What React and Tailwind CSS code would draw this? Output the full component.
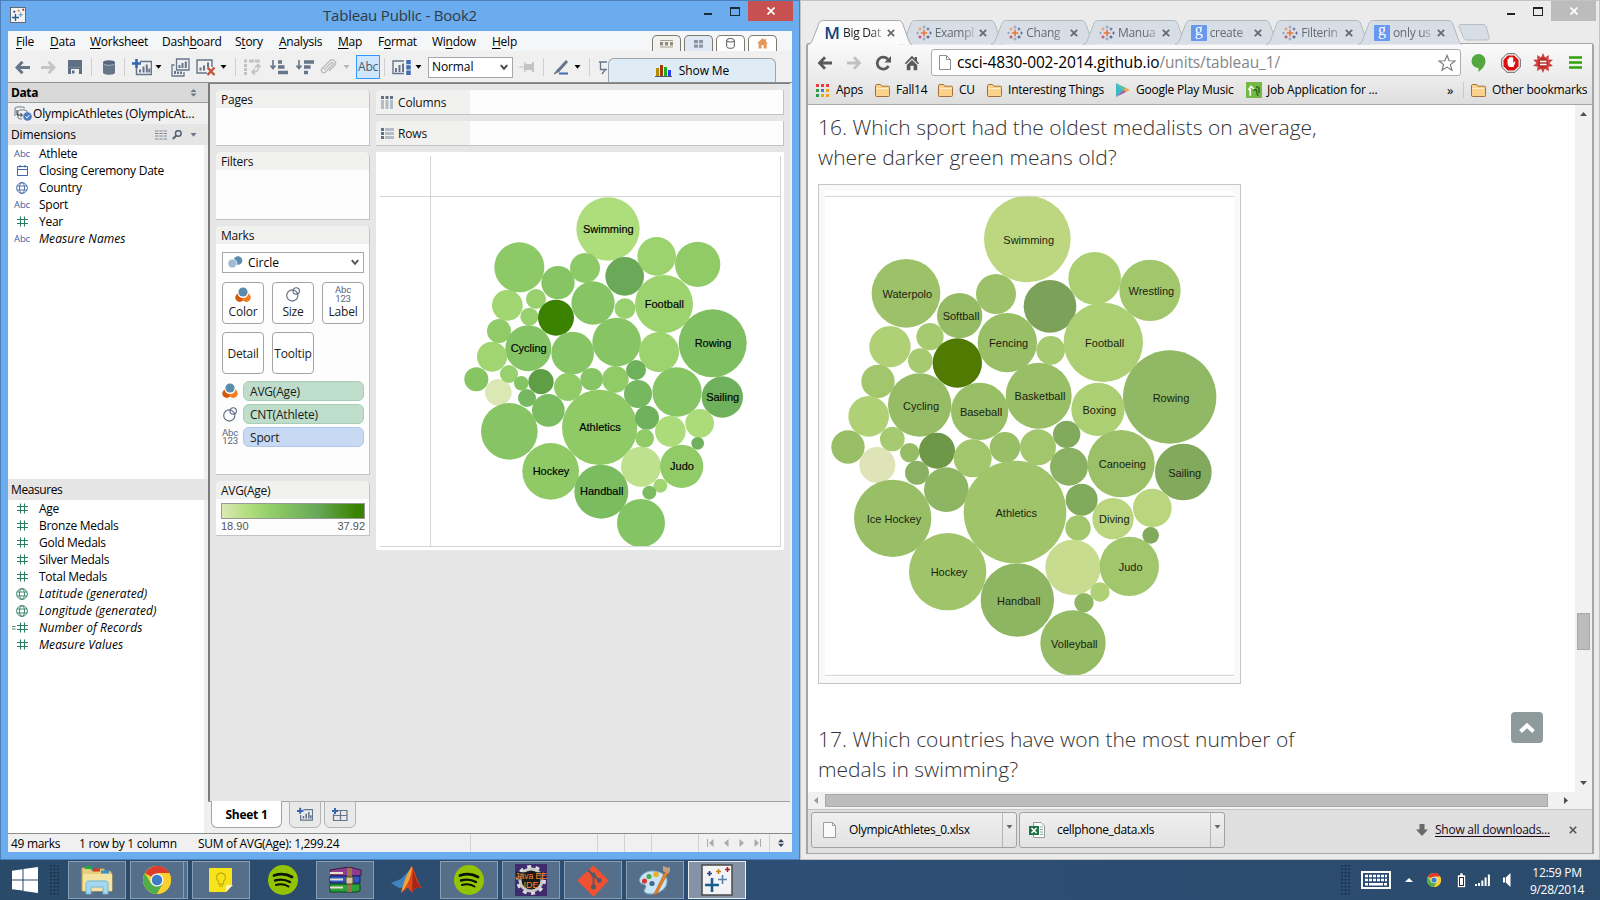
import React from "react";

/* ---------- data ---------- */

// x, y, radius, fill, label (chart units are thirds of a pixel)
const SHEET_BUBBLES = [
  [504, 147, 95, "#aedd7b", "Swimming"],
  [238, 262, 75, "#8dc966"],
  [354, 308, 50, "#87c564"],
  [435, 264, 45, "#8dc966"],
  [554, 289, 58, "#69a958"],
  [650, 229, 58, "#9dd36f"],
  [773, 253, 68, "#91cb68"],
  [202, 376, 46, "#a0d571"],
  [288, 357, 30, "#97d06c"],
  [268, 410, 27, "#97d06c"],
  [348, 413, 54, "#3b8200"],
  [459, 369, 65, "#87c564"],
  [555, 386, 31, "#97d06c"],
  [672, 372, 87, "#9dd36f", "Football"],
  [818, 490, 102, "#7fbf62", "Rowing"],
  [177, 453, 36, "#91cb68"],
  [265, 505, 69, "#85c464", "Cycling"],
  [156, 530, 45, "#a0d571"],
  [398, 519, 64, "#87c564"],
  [530, 486, 73, "#87c564"],
  [657, 516, 60, "#9dd36f"],
  [109, 598, 36, "#87c564"],
  [175, 637, 40, "#dce8b4"],
  [207, 582, 27, "#97d06c"],
  [244, 610, 22, "#85c464"],
  [303, 605, 38, "#5e9f45"],
  [384, 621, 42, "#91cb68"],
  [455, 598, 34, "#87c564"],
  [526, 598, 40, "#91cb68"],
  [588, 570, 30, "#6fb05d"],
  [594, 642, 42, "#76b860"],
  [711, 636, 74, "#87c564"],
  [847, 651, 62, "#6fb05d", "Sailing"],
  [261, 654, 27, "#76b860"],
  [325, 691, 49, "#7cbc61"],
  [208, 754, 85, "#87c564"],
  [479, 742, 113, "#8fca67", "Athletics"],
  [621, 713, 36, "#6fb05d"],
  [614, 775, 28, "#91cb68"],
  [691, 754, 46, "#abdc79"],
  [779, 730, 43, "#abdc79"],
  [773, 790, 19, "#6fb05d"],
  [603, 860, 60, "#bde18c"],
  [725, 859, 65, "#91cb68", "Judo"],
  [661, 917, 21, "#a0d571"],
  [628, 938, 21, "#7cbc61"],
  [332, 874, 85, "#8fca67", "Hockey"],
  [484, 935, 81, "#7cbc61", "Handball"],
  [603, 1029, 72, "#85c464"],
];

const PAGE_BUBBLES = [
  [652, 177, 130, "#bcd77f", "Swimming"],
  [288, 340, 103, "#9cc168", "Waterpolo"],
  [449, 407, 68, "#95bb65", "Softball"],
  [558, 342, 60, "#9cc168"],
  [720, 379, 79, "#7ba258"],
  [854, 295, 79, "#accf74"],
  [1020, 331, 92, "#a1c66c", "Wrestling"],
  [240, 500, 62, "#afd075"],
  [360, 470, 41, "#a6ca6f"],
  [331, 542, 37, "#a6ca6f"],
  [442, 549, 74, "#507a02"],
  [592, 488, 89, "#98be66", "Fencing"],
  [722, 511, 43, "#a6ca6f"],
  [880, 487, 119, "#accf74", "Football"],
  [1079, 651, 140, "#91b864", "Rowing"],
  [204, 604, 50, "#a1c66c"],
  [329, 675, 95, "#96bc65", "Cycling"],
  [176, 709, 61, "#afd075"],
  [509, 694, 86, "#98be66", "Baseball"],
  [686, 647, 99, "#98be66", "Basketball"],
  [864, 688, 80, "#accf74", "Boxing"],
  [114, 801, 50, "#98be66"],
  [202, 855, 54, "#dfe4b8"],
  [247, 777, 37, "#a6ca6f"],
  [299, 818, 29, "#96bc65"],
  [381, 812, 54, "#6e9747"],
  [488, 835, 57, "#a1c66c"],
  [585, 802, 46, "#98be66"],
  [684, 802, 54, "#a1c66c"],
  [770, 763, 41, "#82aa5d"],
  [777, 860, 57, "#89b161"],
  [933, 851, 101, "#9bc068", "Canoeing"],
  [1120, 876, 85, "#82a95c", "Sailing"],
  [321, 878, 36, "#89b161"],
  [409, 929, 67, "#8db562"],
  [248, 1015, 116, "#98be66", "Ice Hockey"],
  [615, 996, 154, "#9fc46a", "Athletics"],
  [815, 959, 48, "#82aa5d"],
  [804, 1044, 38, "#a1c66c"],
  [909, 1016, 62, "#b9d57d", "Diving"],
  [1027, 984, 58, "#b9d57d"],
  [1022, 1066, 25, "#82aa5d"],
  [789, 1162, 83, "#c7dc8e"],
  [958, 1159, 89, "#a1c66c", "Judo"],
  [870, 1236, 29, "#afd075"],
  [822, 1268, 29, "#8db562"],
  [413, 1175, 116, "#9fc46a", "Hockey"],
  [622, 1260, 110, "#8db562", "Handball"],
  [789, 1389, 98, "#95bb64", "Volleyball"],
];

const MENUS = [
  ["", "F", "ile", "w-[34px]"],
  ["", "D", "ata", "w-[40px]"],
  ["", "W", "orksheet", "w-[72px]"],
  ["Dash", "b", "oard", "w-[73px]"],
  ["S", "t", "ory", "w-[44px]"],
  ["", "A", "nalysis", "w-[59px]"],
  ["", "M", "ap", "w-[40px]"],
  ["F", "o", "rmat", "w-[54px]"],
  ["Wi", "n", "dow", "w-[60px]"],
  ["", "H", "elp", "w-[40px]"],
];

/* ---------- shared pieces ---------- */

function Bubbles({ data, dx = 1, offset = 10, labels = "" }) {
  return data.map(([x, y, r, fill, label], i) => (
    <g key={i}>
      <circle cx={x} cy={y} r={r} fill={fill} />
      {label && (
        <text x={x + dx} y={y + offset} textAnchor="middle" fontSize="33" className={labels}>
          {label}
        </text>
      )}
    </g>
  ));
}

function Caret({ className = "" }) {
  return (
    <svg className={className} width="7" height="4" viewBox="0 0 7 4">
      <path d="M0.5 0H6.5L3.5 3.8Z" fill="currentColor" />
    </svg>
  );
}

function Sep({ className = "" }) {
  return <div className={"h-[18px] w-px shrink-0 bg-[#cfcfcf] " + className} />;
}

function TableauCrosses({ size = 16 }) {
  return (
    <svg width={size} height={size} viewBox="0 0 32 32">
      <rect x="1" y="1" width="30" height="30" fill="#f3f3f5" stroke="#4a4a4a" strokeWidth="1.500" />
      <path d="M11 14v14M4 21h14" stroke="#1b5c8f" strokeWidth="2.600" />
      <path d="M8.500 7v5M6 9.500h5" stroke="#2d3e83" strokeWidth="1.600" />
      <path d="M17.500 5v5M15 7.500h5" stroke="#c3811c" strokeWidth="1.600" />
      <path d="M26.500 3v5M24 5.500h5" stroke="#a02323" strokeWidth="1.600" />
      <path d="M21.500 11v9M17 15.500h9" stroke="#5284ad" strokeWidth="1.600" />
    </svg>
  );
}

function Sparkle() {
  return (
    <svg width="16" height="16" viewBox="0 0 16 16" fill="none">
      <path d="M8 4.800v6.400M4.800 8h6.400" stroke="#e8763a" strokeWidth="1.600" />
      <path d="M8 0.500v3M6.500 2h3M8 12.500v3M6.500 14h3" stroke="#8ba0bd" />
      <path d="M4 2.500v3M2.500 4h3" stroke="#e8915c" />
      <path d="M12 2.500v3M10.500 4h3M14.500 6.500v3M13.200 8h2.600" stroke="#5d6b96" />
      <path d="M4 10.500v3M2.500 12h3" stroke="#c9566a" strokeWidth="1.400" />
      <path d="M12 10.500v3M10.500 12h3" stroke="#5d6b96" strokeWidth="1.400" />
      <path d="M1.500 6.800v2.400M0.300 8h2.400" stroke="#8ba0bd" />
    </svg>
  );
}

function ChromeLogo({ size }) {
  return (
    <svg width={size} height={size} viewBox="0 0 28 28">
      <circle cx="14" cy="14" r="14" fill="#fbd02c" />
      <path d="M14 14 1.900 7A14 14 0 0 1 26.100 7Z" fill="#dc3b2e" />
      <path d="M14 0a14 14 0 0 1 12.100 7H14Z" fill="#dc3b2e" />
      <path d="M1.900 7A14 14 0 0 0 14 28L20 17.500 8 17.500Z" fill="#4fae4b" />
      <path d="M14 7H26.100A14 14 0 0 1 14 28L20 17.500Z" fill="#fbd02c" />
      <circle cx="14" cy="14" r="6.600" fill="#f3f3f3" />
      <circle cx="14" cy="14" r="5.200" fill="#3b7cc4" />
    </svg>
  );
}

function ColorDots() {
  return (
    <svg width="16" height="16" viewBox="0 0 16 16">
      <circle cx="4.700" cy="10.500" r="4.400" fill="#d45a0b" />
      <circle cx="11.300" cy="10.500" r="4.400" fill="#f57d20" />
      <circle cx="8" cy="5.500" r="5.500" fill="#fff" />
      <circle cx="8" cy="5" r="4.600" fill="#5c8bb0" />
    </svg>
  );
}

function SizeRings() {
  return (
    <svg width="14" height="15" viewBox="0 0 14 15" fill="none" stroke="#5a6a80" strokeWidth="1.100">
      <circle cx="6.300" cy="8.500" r="5.600" />
      <circle cx="10.200" cy="3.900" r="3.200" />
    </svg>
  );
}

function Abc123() {
  return (
    <div className="text-center font-['Roboto',sans-serif] text-[9.500px] leading-[8.500px] tracking-[-0.1px] text-[#55647d]">
      Abc
      <br />
      123
    </div>
  );
}

/* ---------- Tableau window ---------- */

function TitleBar() {
  return (
    <div className="flex h-[31px] items-start">
      <div className="ml-[10px] mt-[7px]">
        <TableauCrosses />
      </div>
      <div className="ml-[297px] mt-[5px] w-[381px] text-[15px] leading-[21px] tracking-[-0.2px] text-[#2f3a46]">Tableau Public - Book2</div>
      <div className="mt-[13px] h-[2px] w-[8px] bg-[#1c2a38]" />
      <div className="ml-[18px] mt-[7px] h-[9px] w-[10px] border border-t-2 border-[#1c2a38]" />
      <div className="ml-[8px] mt-px flex h-5 w-[45px] items-center justify-center bg-[#c75050]">
        <svg width="8" height="8" viewBox="0 0 8 8">
          <path d="M0.500 0.500l7 7M7.500 0.500l-7 7" stroke="#fff" strokeWidth="1.700" />
        </svg>
      </div>
    </div>
  );
}

function CornerTab({ className = "", children }) {
  return (
    <div className={"flex h-4 w-[29px] items-center justify-center rounded-t-[5px] border border-b-0 border-[#7b7a6c] " + className}>
      {children}
    </div>
  );
}

function MenuBar() {
  return (
    <div className="flex h-5 items-center bg-[#f5f6f7] pl-2 text-[12px] text-black">
      {MENUS.map(([a, u, b, w]) => (
        <div key={a + u + b} className={"shrink-0 whitespace-nowrap pt-[2px] leading-5 tracking-[-0.25px] " + w}>
          {a}
          <span className="underline underline-offset-2">{u}</span>
          {b}
        </div>
      ))}
      <div className="ml-[120px] flex items-end gap-[3px] self-end">
        <CornerTab className="bg-[#f1f1ee]">
          <svg width="13" height="8" viewBox="0 0 13 8">
            <path d="M0 0.500h13M0 7h13" stroke="#a5a28f" />
            <path d="M0 3.800h13" stroke="#8f8c78" strokeWidth="3.500" strokeDasharray="3 2" />
          </svg>
        </CornerTab>
        <CornerTab className="bg-[#e1e8f5]">
          <svg width="9" height="8" viewBox="0 0 9 8" fill="#8c95a3">
            <path d="M0 0h4v3.300H0zM5 0h4v3.300H5zM0 4.500h4v3.300H0zM5 4.500h4v3.300H5z" />
          </svg>
        </CornerTab>
        <CornerTab className="bg-white">
          <svg width="9" height="11" viewBox="0 0 9 11" fill="none" stroke="#555">
            <ellipse cx="4.500" cy="2.300" rx="3.800" ry="1.800" />
            <path d="M0.700 2.300v6.300c0 2.300 7.600 2.300 7.600 0V2.300" />
          </svg>
        </CornerTab>
        <CornerTab className="bg-white">
          <svg width="11" height="11" viewBox="0 0 11 11">
            <path d="M5.500 0 0 5.500h1.600V10.500h3V7h2v3.500h3V5.500H11L9 3.500V1H7.500v1Z" fill="#e8975a" />
          </svg>
        </CornerTab>
      </div>
    </div>
  );
}

function SheetGlyph() {
  return (
    <g fill="none" stroke="#65758a" strokeWidth="1.500">
      <path d="M8 2.500h11.500v13H4.500V9" />
      <path d="M8 13.500v-3M11.500 13.500v-6M14.800 13.500V5.500M17.300 13.500v-4" strokeWidth="2" />
    </g>
  );
}

function ToolBar() {
  return (
    <div className="relative flex h-[32px] items-center border-b border-[#8f8f8f] bg-[#f0f0f0] pt-px">
      <svg className="ml-[7px] shrink-0" width="15" height="13" viewBox="0 0 15 13" fill="none" stroke="#65758a" strokeWidth="3">
        <path d="M2 6.500h13M7.500 0.800 2 6.500l5.500 5.700" />
      </svg>
      <svg className="ml-[11px] shrink-0" width="15" height="13" viewBox="0 0 15 13" fill="none" stroke="#c6c6c6" strokeWidth="3">
        <path d="M13 6.500H0M7.500 0.800 13 6.500l-5.500 5.700" />
      </svg>
      <svg className="ml-[12px] shrink-0" width="14" height="14" viewBox="0 0 14 14">
        <path d="M0 0h14v14H0z" fill="#5f6f84" />
        <path d="M3 9h8v5H3z" fill="#f0f0f0" />
        <path d="M4 10.500h2.500v3H4z" fill="#5f6f84" />
        <path d="M1 7.500h12" stroke="#78879a" />
      </svg>
      <Sep className="ml-[9px]" />
      <svg className="ml-[11px] shrink-0" width="12" height="15" viewBox="0 0 12 15">
        <path d="M0 2.500v10c0 3 12 3 12 0v-10Z" fill="#65758a" />
        <ellipse cx="6" cy="2.500" rx="6" ry="2.300" fill="#56667c" />
        <path d="M0 3.500c1 2.400 11 2.400 12 0" fill="none" stroke="#b9c2cd" strokeWidth="0.800" />
      </svg>
      <Sep className="ml-[9px]" />
      <svg className="ml-[7px] shrink-0" width="20" height="17" viewBox="0 0 20 17">
        <SheetGlyph />
        <path d="M4.500 0v9M0 4.500h9" stroke="#3467b0" strokeWidth="2.600" />
      </svg>
      <Caret className="ml-[3px] shrink-0 text-black" />
      <svg className="ml-[9px] shrink-0" width="19" height="19" viewBox="0 0 19 19" fill="none" stroke="#65758a" strokeWidth="1.300">
        <path d="M5.500 1h12.500v11h-12.500zM3.500 7H1v11h12v-4" />
        <path d="M8.500 10V7M11.500 10V5M14.800 10V3.500M4 16v-3M7 16v-2.500M10 16v-2.500" strokeWidth="2" />
      </svg>
      <svg className="ml-[6px] shrink-0" width="20" height="18" viewBox="0 0 20 18" fill="none" stroke="#65758a" strokeWidth="1.400">
        <path d="M11 15H1V2h15v7" />
        <path d="M4.500 12.500v-3M8 12.500v-5M12 9V4.500" strokeWidth="2" />
        <path d="m11.500 9.500 7 7.500M18.500 9.500l-7 7.500" stroke="#bf5335" strokeWidth="2.300" />
      </svg>
      <Caret className="ml-[4px] shrink-0 text-black" />
      <Sep className="ml-[8px]" />
      <svg className="ml-[8px] shrink-0" width="17" height="16" viewBox="0 0 17 16" fill="none" stroke="#c2c2c2" strokeWidth="3">
        <path d="M0 2h3M5 2h11" strokeDasharray="5 0.800" />
        <path d="M1.500 5v11" strokeDasharray="3 1" />
        <path d="M14 6v4c0 2-2 3-5 3M11 8.500l3-3 3 3M11 10l-3 3 3 3" strokeWidth="1.600" />
      </svg>
      <svg className="ml-[9px] shrink-0" width="18" height="15" viewBox="0 0 18 15" fill="none" stroke="#65758a">
        <path d="M3 0v8M0.500 5.500 3 8.500l2.500-3" strokeWidth="1.600" />
        <path d="M8 2h4M8 7h6.500M8 12.500h10" strokeWidth="3.300" />
      </svg>
      <svg className="ml-[8px] shrink-0" width="18" height="15" viewBox="0 0 18 15" fill="none" stroke="#65758a">
        <path d="M3 0v8M0.500 5.500 3 8.500l2.500-3" strokeWidth="1.600" />
        <path d="M8 2h10M8 7h6.500M8 12.500h4" strokeWidth="3.300" />
      </svg>
      <svg className="ml-[6px] shrink-0" width="17" height="16" viewBox="0 0 17 16" fill="none" stroke="#bdbdbd" strokeWidth="1.400">
        <path d="M4 11 11 4c1.500-1.300 3 .3 1.800 1.600L5.500 13c-2.500 2-5.500-.8-3.500-3.300L9.500 2C13-1 17.500 3 14.500 6.500L9 12" />
      </svg>
      <Caret className="ml-[6px] shrink-0 text-[#b5b5b5]" />
      <div className="ml-[6px] flex h-6 w-6 shrink-0 items-center justify-center border border-[#3399ff] bg-[#cfe5fb] text-[12px] tracking-[-0.3px] text-[#4b5b70]">Abc</div>
      <Sep className="ml-[4px]" />
      <svg className="ml-[7px] shrink-0" width="20" height="15" viewBox="0 0 20 15" fill="none">
        <path d="M12 1H1v12.500h11" stroke="#65758a" strokeWidth="1.400" />
        <path d="M4 12V8M7.500 12V5M11 12V3.500" stroke="#65758a" strokeWidth="2" />
        <path d="M16.500 0v4.300M16.500 5.300v4.300M16.500 10.600v4.300" stroke="#3f6db5" strokeWidth="4.500" />
      </svg>
      <Caret className="ml-[3px] shrink-0 text-black" />
      <div className="ml-[6px] flex h-[21px] w-[85px] shrink-0 items-center justify-between border border-[#a5a8ad] bg-white pl-[3px] pr-1 text-[12px] tracking-[-0.1px] text-black">
        Normal
        <svg width="8" height="7" viewBox="0 0 8 7">
          <path d="m0.800 1.200 3.200 3.600 3.200-3.600" fill="none" stroke="#444" strokeWidth="2" />
        </svg>
      </div>
      <svg className="ml-[6px] shrink-0" width="16" height="12" viewBox="0 0 16 12" fill="#c4c4c4">
        <path d="M0 5.500h5v1H0zM5 1h1.500v2H13V1h2v10h-2V9H6.500v2H5z" />
      </svg>
      <Sep className="ml-[8px]" />
      <svg className="ml-[9px] shrink-0" width="16" height="15" viewBox="0 0 16 15">
        <path d="M14 1 5 11" stroke="#65758a" strokeWidth="3" />
        <path d="M5.500 8.500 1 14l5-2.500Z" fill="#65758a" stroke="#65758a" />
        <path d="M6 13.500h9" stroke="#3f6db5" strokeWidth="2" />
      </svg>
      <Caret className="ml-[5px] shrink-0 text-black" />
      <Sep className="ml-[8px]" />
      <svg className="ml-[9px] shrink-0" width="8" height="15" viewBox="0 0 8 15" fill="none" stroke="#65758a" strokeWidth="1.300">
        <path d="M0 2h8M1.500 2v7.500H8M6 10l-3 4" />
      </svg>
      <div className="absolute bottom-0 left-[600px] flex h-[24px] w-[168px] items-center justify-center gap-[7px] rounded-t-[6px] border border-b-0 border-[#9fa5ab] bg-[#dfebf5] text-[12px] tracking-[-0.1px] text-black">
        <svg width="17" height="13" viewBox="0 0 17 13">
          <path d="M1 4h3v8H1z" fill="#b38b00" />
          <path d="M5 1h3v11H5z" fill="#a23610" />
          <path d="M9 3h3v9H9z" fill="#1db01d" />
          <path d="M13 6h3v6h-3z" fill="#2a3cf5" />
          <path d="M0 12.500h17" stroke="#4a5b70" />
        </svg>
        Show Me
      </div>
    </div>
  );
}

function Hash({ calc = false }) {
  return (
    <svg width="16" height="11" viewBox="0 0 16 11" fill="none" stroke="#2c7d62">
      <path d="M8.500 0.500v10M12.500 0.500v10M5 3.500h11M5 7.500h11" strokeWidth="1.100" />
      {calc && <path d="M0 4.500h3.500M0 7h3.500" strokeWidth="0.900" />}
    </svg>
  );
}

function Globe({ className }) {
  return (
    <svg className={className} width="12" height="12" viewBox="0 0 12 12" fill="none" stroke="currentColor" strokeWidth="0.900">
      <circle cx="6" cy="6" r="5.400" />
      <ellipse cx="6" cy="6" rx="2.500" ry="5.400" />
      <path d="M1 4h10M1 8h10" />
    </svg>
  );
}

function FieldRow({ icon, italic = false, children }) {
  return (
    <div className="flex h-[17px] items-center">
      <div className="flex w-[31px] shrink-0 items-center">{icon}</div>
      <div className={"whitespace-nowrap text-[12px] leading-[17px] text-black " + (italic ? "italic tracking-[0.08px]" : "tracking-[-0.27px]")}>{children}</div>
    </div>
  );
}

function AbcIcon() {
  return <div className="pl-[6px] text-[9.500px] leading-[16px] tracking-[-0.1px] text-[#3f5f9e]">Abc</div>;
}

function DataPane() {
  const hash = <div className="pl-1"><Hash /></div>;
  return (
    <div className="flex h-[750px] w-[200px] shrink-0 flex-col bg-[#efefef]">
      <div className="flex h-[20px] items-center justify-between border-b border-[#9c9c9c] bg-[#d9d9d9] pl-[3px] pr-[11px] text-[12px] font-bold tracking-[-0.4px] text-black">
        Data
        <svg width="7" height="8" viewBox="0 0 7 8" fill="#6b7786">
          <path d="M3.500 0 6.500 3h-6ZM3.500 7.500l-3-3h6Z" />
        </svg>
      </div>
      <div className="flex h-[21px] items-center bg-[#f0f0f0] pl-[6px] text-[12px] text-black">
        <svg className="mr-px shrink-0" width="18" height="15" viewBox="0 0 18 15" fill="none" stroke="#6d7681">
          <path d="M1 10V2c0-1.500 9-1.500 10 0M4 12V5c1-1.500 8-1.500 9 0v2M4 12c1 1 3 1 4 1" />
          <path d="M3 4v5h5M6.500 7l2 2-2 2" stroke="#333" />
          <circle cx="13.500" cy="10.500" r="4.300" fill="#4a7bc0" stroke="none" />
          <path d="m11.500 10.500 1.500 1.600 2.500-3.300" stroke="#fff" />
        </svg>
        <div className="whitespace-nowrap tracking-[-0.12px]">OlympicAthletes (OlympicAt...</div>
      </div>
      <div className="flex h-[21px] items-center bg-[#e5e5e5] pl-[3px] text-[12px] text-black">
        <div className="w-[144px] tracking-[-0.1px]">Dimensions</div>
        <svg width="12" height="10" viewBox="0 0 12 10" stroke="#7f8691" strokeDasharray="3.300 1">
          <path d="M0 1h12M0 3.500h12M0 6h12M0 9h12" />
        </svg>
        <svg className="ml-[5px]" width="10" height="10" viewBox="0 0 10 10" fill="none" stroke="#56657a">
          <circle cx="6.300" cy="3.500" r="2.800" strokeWidth="1.500" />
          <path d="M4.300 5.500.8 9" strokeWidth="2" />
        </svg>
        <Caret className="ml-[8px] text-[#6b7786]" />
      </div>
      <div className="h-[334px] w-[196px] bg-white">
        <FieldRow icon={<AbcIcon />}>Athlete</FieldRow>
        <FieldRow
          icon={
            <svg className="ml-[9px]" width="11" height="11" viewBox="0 0 11 11" fill="none" stroke="#3f66a8">
              <path d="M0.500 1.500h10v9H0.500zM0.500 4.500h10M3 0v2.500M8 0v2.500" />
            </svg>
          }
        >
          Closing Ceremony Date
        </FieldRow>
        <FieldRow icon={<Globe className="ml-[8px] text-[#3f66a8]" />}>Country</FieldRow>
        <FieldRow icon={<AbcIcon />}>Sport</FieldRow>
        <FieldRow icon={hash}>Year</FieldRow>
        <FieldRow icon={<AbcIcon />} italic>Measure Names</FieldRow>
      </div>
      <div className="flex h-[21px] items-center bg-[#e5e5e5] pl-[3px] text-[12px] tracking-[-0.4px] text-black">Measures</div>
      <div className="w-[196px] grow bg-white">
        <FieldRow icon={hash}>Age</FieldRow>
        <FieldRow icon={hash}>Bronze Medals</FieldRow>
        <FieldRow icon={hash}>Gold Medals</FieldRow>
        <FieldRow icon={hash}>Silver Medals</FieldRow>
        <FieldRow icon={hash}>Total Medals</FieldRow>
        <FieldRow icon={<Globe className="ml-[8px] text-[#2c7d62]" />} italic>Latitude (generated)</FieldRow>
        <FieldRow icon={<Globe className="ml-[8px] text-[#2c7d62]" />} italic>Longitude (generated)</FieldRow>
        <FieldRow icon={<div className="pl-1"><Hash calc /></div>} italic>Number of Records</FieldRow>
        <FieldRow icon={hash} italic>Measure Values</FieldRow>
      </div>
    </div>
  );
}

function Card({ title, className = "", children }) {
  return (
    <div className={"w-[154px] shrink-0 rounded-t-[5px] border-b border-r border-[#c3c3c3] bg-[#fdfdfd] " + className}>
      <div className="h-[18px] rounded-t-[5px] bg-[#f1f1ef] pl-[5px] text-[12px] leading-[20px] tracking-[-0.25px] text-[#111]">{title}</div>
      {children}
    </div>
  );
}

function MarkButton({ icon, label }) {
  return (
    <div className="flex h-[42px] w-[42px] flex-col items-center justify-center rounded-[4px] border border-[#a3a3a3] bg-white text-[12px] leading-[16px] tracking-[-0.2px] text-[#222]">
      {icon && <div className="flex h-[17px] items-center justify-center">{icon}</div>}
      <div className="pt-px">{label}</div>
    </div>
  );
}

function Pill({ icon, label, className }) {
  return (
    <div className="flex h-[20px] items-center">
      <div className="flex w-[21px] shrink-0">{icon}</div>
      <div className={"h-[20px] w-[121px] rounded-[6px] border pl-[6px] text-[12px] leading-[19px] tracking-[-0.2px] text-[#1b1b1b] " + className}>{label}</div>
    </div>
  );
}

function CardColumn() {
  return (
    <div className="flex w-[154px] shrink-0 flex-col gap-[6px]">
      <Card title="Pages" className="h-[56px]" />
      <Card title="Filters" className="h-[68px]" />
      <Card title="Marks" className="h-[249px]">
        <div className="ml-[6px] mt-[8px] flex h-[21px] w-[142px] items-center border border-[#a5a8ad] bg-white pl-[5px] pr-1 text-[12px] text-black">
          <svg width="15" height="13" viewBox="0 0 15 13">
            <circle cx="10" cy="4.500" r="4.300" fill="#5c8bb0" />
            <circle cx="4.300" cy="7.500" r="4.500" fill="#a0bcd2" stroke="#fff" strokeWidth="0.700" />
          </svg>
          <div className="ml-[5px] grow">Circle</div>
          <svg width="8" height="7" viewBox="0 0 8 7">
            <path d="m0.800 1.200 3.200 3.600 3.200-3.600" fill="none" stroke="#555" strokeWidth="2" />
          </svg>
        </div>
        <div className="ml-[6px] mt-[9px] flex flex-wrap gap-2">
          <MarkButton icon={<ColorDots />} label="Color" />
          <MarkButton icon={<SizeRings />} label="Size" />
          <MarkButton icon={<Abc123 />} label="Label" />
          <MarkButton label="Detail" />
          <MarkButton label="Tooltip" />
        </div>
        <div className="ml-[6px] mt-[7px] flex flex-col gap-[3px]">
          <Pill icon={<ColorDots />} label="AVG(Age)" className="border-[#a8ceb9] bg-[#bedecb]" />
          <Pill icon={<div className="pl-px"><SizeRings /></div>} label="CNT(Athlete)" className="border-[#a8ceb9] bg-[#bedecb]" />
          <Pill icon={<Abc123 />} label="Sport" className="border-[#aec6e8] bg-[#c8daf3]" />
        </div>
      </Card>
      <Card title="AVG(Age)" className="h-[55px]">
        <div className="ml-[5px] mt-[4px] h-[16px] w-[144px] border border-[#999] bg-[linear-gradient(90deg,#dce8b4_0%,#aedd7b_20%,#87c564_42%,#65a756_68%,#3b8200_95%)]" />
        <div className="ml-[5px] flex w-[144px] justify-between font-['Liberation_Sans',sans-serif] text-[11px] leading-[15px] text-[#555]">
          <span>18.90</span>
          <span>37.92</span>
        </div>
      </Card>
    </div>
  );
}

function Shelf({ icon, label }) {
  return (
    <div className="flex h-[25px] rounded-tl-[5px] border-b border-r border-[#c3c3c3] bg-[#fdfdfd]">
      <div className="flex w-[94px] items-center rounded-tl-[5px] bg-[#f1f1ef] pl-[5px] pt-px text-[12px] tracking-[-0.15px] text-[#111]">
        {icon}
        {label}
      </div>
    </div>
  );
}

function SheetArea() {
  return (
    <div className="flex h-[718px] gap-[6px] border-l-2 border-t border-[#7d7d7d] bg-[#e6e6e6] pl-[6px] pt-[6px]">
      <CardColumn />
      <div className="flex w-[408px] flex-col gap-[6px]">
        <Shelf
          label="Columns"
          icon={
            <svg className="mr-[5px]" width="12" height="13" viewBox="0 0 12 13">
              <path d="M0 0h3v3H0zM4.500 0h3v3h-3zM9 0h3v3H9z" fill="#5f6f84" />
              <path d="M0 4h3v9H0zM4.500 4h3v9h-3zM9 4h3v9H9z" fill="#b4bcc6" />
            </svg>
          }
        />
        <Shelf
          label="Rows"
          icon={
            <svg className="mr-[4px]" width="13" height="11" viewBox="0 0 13 11">
              <path d="M0 0h3v3H0zM0 4h3v3H0zM0 8h3v3H0z" fill="#5f6f84" />
              <path d="M4 0h9v3H4zM4 4h9v3H4zM4 8h9v3H4z" fill="#b4bcc6" />
            </svg>
          }
        />
        <svg className="block bg-white" width="408" height="398" viewBox="0 0 1224 1194">
          <g stroke="#d4d4d4" strokeWidth="3">
            <path d="M12 133.500H1215M12 1183.500H1215M163.500 12V1182M1213.500 12V1182" />
          </g>
          <clipPath id="pane"><rect width="1224" height="1182" /></clipPath>
          <g clipPath="url(#pane)">
            <g transform="translate(192 84)">
              <Bubbles data={SHEET_BUBBLES} offset={11} labels="fill-black stroke-black stroke-[0.5px] font-['Liberation_Sans',sans-serif]" />
            </g>
          </g>
        </svg>
      </div>
    </div>
  );
}

function SheetTabs() {
  return (
    <div className="flex h-[31px] items-start border-t border-[#a3a3a3] bg-[#f0f0f0] pl-[3px]">
      <div className="-mt-px flex h-[27px] w-[71px] items-center justify-center rounded-b-[6px] border border-t-0 border-[#a3a3a3] bg-white pt-[2px] text-[12px] font-bold tracking-[-0.25px] text-black">Sheet 1</div>
      <div className="-mt-px ml-[7px] flex h-[27px] w-[32px] items-center justify-center rounded-b-[6px] border border-[#b3b3b3] bg-[#e9e9e9]">
        <svg width="16" height="15" viewBox="0 0 20 17">
          <SheetGlyph />
          <path d="M4 0v7.500M0 4h8" stroke="#3467b0" strokeWidth="2.500" />
        </svg>
      </div>
      <div className="-mt-px ml-[3px] flex h-[27px] w-[32px] items-center justify-center rounded-b-[6px] border border-[#b3b3b3] bg-[#e9e9e9]">
        <svg width="16" height="14" viewBox="0 0 16 14" fill="none">
          <path d="M6 2.500h9v10H1.500V6M1.500 7.500H15M8.500 2.500v10" stroke="#65758a" strokeWidth="1.200" />
          <path d="M3 0v6M0 3h6" stroke="#3467b0" strokeWidth="2" />
        </svg>
      </div>
    </div>
  );
}

function StatusBar() {
  return (
    <div className="flex h-[19px] items-center border-t border-[#8a8f8a] bg-[#f0f0f0] pl-[3px] text-[12px] tracking-[-0.3px] text-black">
      <div className="w-[68px] pt-[2px]">49 marks</div>
      <div className="w-[119px] pt-[2px]">1 row by 1 column</div>
      <div className="w-[272px] pt-[2px]">SUM of AVG(Age): 1,299.24</div>
      <div className="h-full w-[127px] border-l border-[#d2d2d2]" />
      <div className="h-full w-[27px] border-l border-[#d2d2d2]" />
      <div className="h-full w-[27px] border-l border-[#d2d2d2]" />
      <div className="h-full w-[47px] border-l border-[#d2d2d2]" />
      <div className="flex h-full w-[71px] items-center justify-between border-l border-[#d2d2d2] px-[8px] text-[#aaa]">
        <svg width="7" height="8" viewBox="0 0 7 8" fill="currentColor"><path d="M0 0h1v8H0zM6.500 0v8L2 4z" /></svg>
        <svg width="5" height="8" viewBox="0 0 5 8" fill="currentColor"><path d="M4.500 0v8L0 4z" /></svg>
        <svg width="5" height="8" viewBox="0 0 5 8" fill="currentColor"><path d="M0.500 0v8L5 4z" /></svg>
        <svg width="7" height="8" viewBox="0 0 7 8" fill="currentColor"><path d="M6 0h1v8H6zM0.500 0v8L5 4z" /></svg>
      </div>
      <div className="flex h-full grow items-center justify-center border-l border-[#d2d2d2]">
        <svg width="6" height="8" viewBox="0 0 6 8" fill="#33475c"><path d="M3 0 6 3.300H0ZM3 8 0 4.700h6Z" /></svg>
      </div>
    </div>
  );
}

function TableauWindow() {
  return (
    <div className="h-[860px] w-[800px] shrink-0 border border-[#4c80b8] bg-[#6aacee]">
      <div className="-ml-px -mt-px">
        <TitleBar />
        <div className="ml-2 flex h-[821px] w-[784px] flex-col bg-[#f0f0f0]">
          <MenuBar />
          <ToolBar />
          <div className="flex h-[750px]">
            <DataPane />
            <div className="w-[584px] pr-[2px]">
              <SheetArea />
              <SheetTabs />
            </div>
          </div>
          <StatusBar />
        </div>
      </div>
    </div>
  );
}

/* ---------- Chrome window ---------- */

function GoogleIcon() {
  return (
    <div className="flex h-4 w-4 items-center justify-center rounded-[1px] bg-[#6797ee] pb-[5px] font-['Liberation_Serif',serif] text-[16px] leading-4 text-white">g</div>
  );
}

function MIcon() {
  return <div className="w-4 text-center font-['Open_Sans',sans-serif] text-[17px] font-semibold leading-4 text-[#10437c]">M</div>;
}

function Tab({ icon, title, active = false }) {
  return (
    <div className={"relative h-6 w-[91.67px] shrink-0 " + (active ? "z-10" : "")}>
      <svg className="absolute left-0 top-0" width="104" height="25" viewBox="0 0 104 25">
        <path
          d="M0 24.500C3 24 3.500 22 4.500 20L10.500 4.500C11.500 1.500 12.500 .5 15.500 .5H90C93 .5 94 1.500 95 4.500L100.500 20C101.500 22.500 102 24 104 24.500"
          fill={active ? "#fbfbfb" : "#d8dee6"}
          stroke={active ? "#a9a9a9" : "#b3b8be"}
        />
      </svg>
      <div className="relative flex h-6 items-center pl-[16px] pt-px">
        {icon}
        <div className={"ml-[3px] w-[40px] whitespace-nowrap text-[12px] leading-5 tracking-[-0.3px] [mask-image:linear-gradient(90deg,#000_70%,rgba(0,0,0,0.25)_100%)] " + (active ? "text-[#222]" : "text-[#666b72]")}>{title}</div>
        <svg className="ml-[4px] shrink-0" width="8" height="8" viewBox="0 0 8 8">
          <path d="m.8.8 6.400 6.400M7.200.8.800 7.200" stroke="#666" strokeWidth="1.700" />
        </svg>
      </div>
    </div>
  );
}

function Folder() {
  return (
    <svg className="mr-[6px] shrink-0" width="15" height="13" viewBox="0 0 15 13">
      <path d="M.5 11.500V1.800C.5 1 1 .5 1.700.5h3.800l1.200 1.700h6.800c.7 0 1 .4 1 1v8.300c0 .6-.4 1-1 1h-12c-.6 0-1-.4-1-1Z" fill="#fbd28b" stroke="#a5703a" />
      <path d="M1.500 4.500h12" stroke="#fff0cf" />
    </svg>
  );
}

function Bookmark({ icon, label, className }) {
  return (
    <div className={"flex shrink-0 items-center whitespace-nowrap " + className}>
      {icon}
      {label}
    </div>
  );
}

function BrowserToolbar() {
  return (
    <div className="flex h-[33px] items-center bg-gradient-to-b from-[#fafafa] to-[#ececec] pt-[4px]">
      <svg className="ml-[9px] shrink-0" width="16" height="14" viewBox="0 0 16 14" fill="none" stroke="#5a5a5a" strokeWidth="2.800">
        <path d="M2.500 7H15M8 1.200 2.500 7 8 12.800" />
      </svg>
      <svg className="ml-[13px] shrink-0" width="16" height="14" viewBox="0 0 16 14" fill="none" stroke="#c2c2c2" strokeWidth="2.800">
        <path d="M13.500 7H1M8 1.200 13.500 7 8 12.800" />
      </svg>
      <svg className="ml-[13px] shrink-0" width="17" height="16" viewBox="0 0 17 16">
        <path d="M13.500 11a6 6 0 1 1-.5-6.500" fill="none" stroke="#5a5a5a" strokeWidth="2.800" />
        <path d="M16 1v6.500H9.500Z" fill="#5a5a5a" />
      </svg>
      <svg className="ml-[12px] shrink-0" width="16" height="16" viewBox="0 0 16 16">
        <path d="M8 .8.800 8.200l1.200 1L8 3.500l6 5.700 1.200-1L13 6V2h-2.300v1.700ZM2.800 10v5.200h3.600v-4.500h3.200v4.500h3.600V10L8 5Z" fill="#5a5a5a" />
      </svg>
      <div className="ml-[11px] flex h-[27px] w-[530px] shrink-0 items-center rounded-[3px] border border-[#aeaeae] bg-white pl-[7px] pr-[4px] font-['Open_Sans',sans-serif] text-[15.500px] leading-none text-black">
        <svg className="mr-[6px] shrink-0" width="12" height="15" viewBox="0 0 12 15">
          <path d="M.5.5h7l4 4v10H.5ZM7.500.5v4h4" fill="#fff" stroke="#8d8d8d" />
        </svg>
        <div className="grow whitespace-nowrap tracking-[-0.14px]">
          csci-4830-002-2014.github.io<span className="text-[#858585]">/units/tableau_1/</span>
        </div>
        <svg width="18" height="18" viewBox="0 0 18 18">
          <path d="m9 1.300 2.100 5.500 5.900.2-4.600 3.600 1.600 5.700L9 13.100l-5 3.200 1.600-5.700L1 7l5.900-.2Z" fill="#fff" stroke="#777" strokeWidth="1.100" />
        </svg>
      </div>
      <svg className="ml-[10px] shrink-0" width="15" height="18" viewBox="0 0 15 18">
        <path d="M7.500 0a7 7 0 0 1 7 7c0 4.500-3.500 8.500-7 11v-4a7 7 0 0 1 0-14Z" fill="#53a93f" />
      </svg>
      <svg className="ml-[15px] shrink-0" width="20" height="20" viewBox="0 0 20 20">
        <path d="M6 .7h8L19.300 6v8L14 19.300H6L.7 14V6Z" fill="#f4f4f4" stroke="#666" />
        <path d="M6.700 2.500h6.600l4.200 4.200v6.600l-4.200 4.200H6.700l-4.200-4.200V6.700Z" fill="#d90f10" />
        <path d="M6.500 9V6.300c0-.8 1.300-.8 1.300 0V5c0-.9 1.500-.9 1.500 0v-.5c0-.9 1.500-.9 1.500 0V5c0-.9 1.500-.9 1.500 0v5l1-1.200c.8-.6 1.500 0 1 .8L12.500 14h-4c-1.500-1-2-2.500-2-5Z" fill="#fff" />
      </svg>
      <svg className="ml-[12px] shrink-0" width="20" height="20" viewBox="0 0 20 20">
        <path d="m10 0 2 4.500L16 2l-.7 4.500 4.700.3L16.500 10l3.500 3-4.500.7.500 4.500-4.200-2.500L10 20l-2-4.300L4 18l.5-4.500L0 13l3.500-3L0 6.800l4.500-.3L4 2l4 2.500Z" fill="#d3403d" />
        <path d="m10 4 4 2.500 1 4L13 15l-5 .5L5 12l.5-5Z" fill="#b8302e" />
        <path d="M7 8.500h6.500M7 11.500h6.500" stroke="#fff" strokeWidth="1.600" />
      </svg>
      <svg className="ml-[16px] shrink-0" width="13" height="13" viewBox="0 0 13 13">
        <path d="M0 1.500h13M0 6.500h13M0 11.500h13" stroke="#2fa30a" strokeWidth="2.700" />
      </svg>
    </div>
  );
}

function BookmarksBar() {
  return (
    <div className="flex h-[28px] items-center border-b border-[#a8a8a8] bg-gradient-to-b from-[#ececec] to-[#dedede] pb-px pl-[8px] text-[12px] tracking-[-0.22px] text-black">
      <Bookmark
        className="w-[59px]"
        label="Apps"
        icon={
          <svg className="mr-[7px]" width="13" height="13" viewBox="0 0 13 13">
            <path d="M0 0h3v3H0zM5 0h3v3H5zM10 0h3v3h-3z" fill="#e2403a" />
            <path d="M0 5h3v3H0zM0 10h3v3H0z" fill="#2b9a4b" />
            <path d="M5 5h3v3H5z" fill="#3a80e0" />
            <path d="M10 5h3v3h-3zM5 10h3v3H5zM10 10h3v3h-3z" fill="#f0a818" />
          </svg>
        }
      />
      <Bookmark className="w-[63px]" icon={<Folder />} label="Fall14" />
      <Bookmark className="w-[49px]" icon={<Folder />} label="CU" />
      <Bookmark className="w-[129px]" icon={<Folder />} label="Interesting Things" />
      <Bookmark
        className="w-[130px]"
        label="Google Play Music"
        icon={
          <svg className="mr-[6px]" width="14" height="14" viewBox="0 0 14 14">
            <path d="M0 0v14l7.500-7Z" fill="#3fb8c8" />
            <path d="M0 0 10 5 7.500 7Z" fill="#57c08a" />
            <path d="M10 5l4 2-4 2-2.500-2Z" fill="#f5a04a" />
            <path d="M0 14l10-5-2.500-2Z" fill="#9a5a9e" />
          </svg>
        }
      />
      <Bookmark
        className="w-[201px]"
        label="Job Application for ..."
        icon={
          <svg className="mr-[5px]" width="16" height="16" viewBox="0 0 16 16">
            <path d="M0 0h16v16H0z" fill="#74b943" />
            <path d="M3.500 13.500c2.500-1.500-.5-4 1-6.500M2.500 8 5 4.500 8 7" fill="none" stroke="#fff" strokeWidth="1.600" />
            <path d="M12.500 13.500c-3-1.500-.5-4-2.500-6l-2.500 1M10 4.500l3 1.500v5" fill="none" stroke="#2f6a1c" strokeWidth="1.500" />
          </svg>
        }
      />
      <div className="w-[16px] text-[13px] leading-4">»</div>
      <div className="h-[16px] w-[8px] border-l border-[#c5cad2]" />
      <Bookmark className="w-[115px]" icon={<Folder />} label="Other bookmarks" />
    </div>
  );
}

function PageContent() {
  return (
    <div className="flex h-[687px]">
      <div className="relative w-[767px] bg-white pl-[10px] pt-[7px] font-['Open_Sans',sans-serif] text-[21px] font-light leading-[30px] text-[#333]">
        <div>
          16. Which sport had the oldest medalists on average,
          <br />
          where darker green means old?
        </div>
        <div className="mt-[12px] h-[500px] w-[423px] border border-[#c6c6c6] bg-[#f9f9f9] p-[6px]">
          <svg className="block" width="409" height="486" viewBox="0 0 1227 1458">
            <rect width="1227" height="1458" fill="#fff" />
            <clipPath id="pic"><rect width="1227" height="1453" /></clipPath>
            <g clipPath="url(#pic)">
              <g transform="translate(-45 -33)">
                <Bubbles data={PAGE_BUBBLES} dx={4} offset={14} labels="fill-[#1a1f10] font-['Liberation_Sans',sans-serif]" />
              </g>
            </g>
            <path d="M0 16H1227M0 1453H1227" stroke="#d2d2d2" strokeWidth="3" />
          </svg>
        </div>
        <div className="mt-[40px]">
          17. Which countries have won the most number of
          <br />
          medals in swimming?
        </div>
        <div className="absolute left-[703px] top-[607px] flex h-[31px] w-[32px] items-center justify-center rounded-[4px] bg-[#8f9a9b]">
          <svg width="16" height="12" viewBox="0 0 16 12">
            <path d="m1.500 9.500 6.500-6 6.500 6" fill="none" stroke="#fff" strokeWidth="4" />
          </svg>
        </div>
      </div>
      <div className="flex w-[17px] flex-col items-center bg-[#f1f1f1]">
        <svg className="mt-[7px]" width="7" height="4" viewBox="0 0 7 4"><path d="M0 4h7L3.500 0Z" fill="#505050" /></svg>
        <div className="mt-[497px] h-[37px] w-[13px] border border-[#a8a8a8] bg-[#bcbcbc]" />
        <svg className="mt-[131px]" width="7" height="4" viewBox="0 0 7 4"><path d="M0 0h7L3.500 4Z" fill="#505050" /></svg>
      </div>
    </div>
  );
}

function Download({ icon, name }) {
  return (
    <div className="flex h-[36px] w-[206px] shrink-0 rounded-[3px] border border-[#a2a2a2] bg-gradient-to-b from-[#efefef] to-[#e2e2e2] text-[12px] tracking-[-0.33px] text-black">
      <div className="flex w-[191px] items-center border-r border-[#b5b5b5] pb-px">
        {icon}
        {name}
      </div>
      <Caret className="ml-[3px] mt-[12px] text-[#666]" />
    </div>
  );
}

function DownloadBar() {
  return (
    <div className="flex h-[44px] items-center gap-[2px] border-t border-[#c4c4c4] bg-[#dfdfdf] pb-[3px] pl-[3px]">
      <Download
        name="OlympicAthletes_0.xlsx"
        icon={
          <svg className="ml-[11px] mr-[13px]" width="13" height="16" viewBox="0 0 13 16">
            <path d="M.5.500h9l3 3v12H.5Z" fill="#fafafa" stroke="#9c9c9c" />
            <path d="M9.500.500v3h3" fill="none" stroke="#9c9c9c" />
          </svg>
        }
      />
      <Download
        name="cellphone_data.xls"
        icon={
          <svg className="ml-[9px] mr-[12px]" width="16" height="16" viewBox="0 0 16 16">
            <path d="M4.500.500h7.500l3.500 3.500v11.500h-11Z" fill="#fff" stroke="#999" />
            <path d="M11 5h3M11 7.500h3M11 10h3M11 12.500h3" stroke="#7fae91" />
            <path d="M0 4h10v9H0z" fill="#1f7246" />
            <path d="m2.500 6 5 5M7.500 6l-5 5" stroke="#fff" strokeWidth="1.500" />
          </svg>
        }
      />
      <svg className="ml-[189px]" width="12" height="12" viewBox="0 0 12 12"><path d="M3.500 0h5v5.500H12L6 12 0 5.500h3.500Z" fill="#696969" /></svg>
      <div className="ml-[5px] w-[132px] text-[12px] tracking-[-0.25px] text-[#1a0a1a]"><span className="underline underline-offset-2">Show all downloads...</span></div>
      <svg width="8" height="8" viewBox="0 0 8 8"><path d="m.8.8 6.400 6.400M7.200.8.800 7.200" stroke="#555" strokeWidth="1.600" /></svg>
    </div>
  );
}

function ChromeWindow() {
  return (
    <div className="flex h-[860px] w-[800px] flex-col border border-[#c3c3c3] bg-[#ebebeb]">
      <div className="flex h-[19px] items-start pl-[706px]">
        <div className="mt-[12px] h-[2px] w-[8px] bg-[#222]" />
        <div className="ml-[18px] mt-[6px] h-[9px] w-[10px] border border-t-2 border-[#222]" />
        <div className="ml-[8px] flex h-5 w-[45px] shrink-0 items-center justify-center bg-[#bcbcbc]">
          <svg width="8" height="8" viewBox="0 0 8 8"><path d="M.5.500l7 7M7.500.500l-7 7" stroke="#fff" strokeWidth="1.700" /></svg>
        </div>
      </div>
      <div className="flex h-6 pl-[7px]">
        <Tab active icon={<MIcon />} title="Big Dat" />
        <Tab icon={<Sparkle />} title="Exampl" />
        <Tab icon={<Sparkle />} title="Chang" />
        <Tab icon={<Sparkle />} title="Manua" />
        <Tab icon={<GoogleIcon />} title="create" />
        <Tab icon={<Sparkle />} title="Filterin" />
        <Tab icon={<GoogleIcon />} title="only us" />
        <svg className="ml-[8px] mt-[4px]" width="32" height="17" viewBox="0 0 32 17">
          <path d="M3 .5h22c2 0 2.500.5 3.200 2l3 11c.5 2 0 2.500-2 2.500H9c-2 0-2.700-.5-3.500-2.500L1.200 3C.7 1.300 1 .5 3 .5Z" fill="#d8dee6" stroke="#b9bfc6" />
        </svg>
      </div>
      <div className="-mt-px ml-[5px] h-[811px] w-[788px] rounded-t-[3px] border-2 border-b border-t border-[#a6a6a6] bg-[#dfdfdf]">
        <BrowserToolbar />
        <BookmarksBar />
        <PageContent />
        <div className="flex h-[17px] items-center bg-[#f1f1f1]">
          <svg className="ml-[6px]" width="4" height="7" viewBox="0 0 4 7"><path d="M4 0v7L0 3.500Z" fill="#9a9a9a" /></svg>
          <div className="ml-[7px] h-[13px] w-[723px] border border-[#a8a8a8] bg-[#bcbcbc]" />
          <svg className="ml-[16px]" width="4" height="7" viewBox="0 0 4 7"><path d="M0 0v7l4-3.500Z" fill="#505050" /></svg>
        </div>
        <DownloadBar />
      </div>
    </div>
  );
}

/* ---------- Taskbar ---------- */

function Grip() {
  return (
    <svg width="9" height="30" viewBox="0 0 9 30">
      <path d="M1 0v30M4.500 0v30M8 0v30" stroke="#15293d" strokeWidth="1.500" strokeDasharray="1.500 2" />
    </svg>
  );
}

function TaskButton({ plain = false, active = false, children }) {
  const look = plain
    ? "border-transparent"
    : active
      ? "border-[#e8edf2] bg-[#8494a6]"
      : "border-[#8b9db2] bg-[#556e89]";
  return <div className={"flex h-[38px] w-[58px] shrink-0 items-center justify-center border " + look}>{children}</div>;
}

function Spotify() {
  return (
    <svg width="30" height="30" viewBox="0 0 30 30" fill="none" stroke="#0c1205" strokeLinecap="round">
      <circle cx="15" cy="15" r="15" fill="#93c401" stroke="none" />
      <path d="M6 10.500c6-2 13-1.500 18 1.500" strokeWidth="2.800" />
      <path d="M7 15.500c5.500-1.600 10.500-1 15 1.500" strokeWidth="2.400" />
      <path d="M8 20c4.500-1.200 8.500-.8 12.500 1.500" strokeWidth="2" />
    </svg>
  );
}

function Taskbar() {
  return (
    <div className="flex h-[40px] items-center bg-gradient-to-r from-[#2a4a6a] via-[#2d4f75] to-[#2b4b6c] text-white">
      <svg className="ml-[12px] shrink-0" width="26" height="26" viewBox="0 0 26 26" fill="#fff">
        <path d="M0 3.700 10.500 2.200v10.200H0ZM11.500 2 26 0v12.400H11.500ZM0 13.400h10.500v10.200L0 22.200ZM11.500 13.400H26V26l-14.500-2Z" />
      </svg>
      <div className="ml-[12px] w-[18px]"><Grip /></div>
      <div className="flex gap-[4px]">
        <TaskButton>
          <svg width="34" height="30" viewBox="0 0 34 30">
            <path d="M2 3h8l2 3h4l1-2h7l1 3 5-1 2 3v17H2Z" fill="#e6cf7d" stroke="#c8ab52" />
            <path d="M5 1h7v3H5z" fill="#18b13a" /><path d="M13 3.500h7v3h-7z" fill="#d23a28" /><path d="M21 5.500h8v3h-8z" fill="#3a8ed0" />
            <path d="M3 9h29v17H3z" fill="#f4e3a2" />
            <path d="M6 29V19c0-2 1-3 3-3h16c2 0 3 1 3 3v10h-5v-7H11v7Z" fill="#a5d8ef" stroke="#70b4d6" />
          </svg>
        </TaskButton>
        <div className="flex w-[58px]">
          <div className="flex h-[38px] w-[54px] items-center justify-center border border-[#8b9db2] bg-[#556e89]"><ChromeLogo size={28} /></div>
          <div className="h-[38px] w-[4px] border border-l-0 border-[#8b9db2] bg-[#556e89]" />
        </div>
        <TaskButton>
          <svg width="24" height="24" viewBox="0 0 24 24">
            <path d="M1 0h22v17l-6 7H1Q0 24 0 23V1Q0 0 1 0Z" fill="#f9e41c" />
            <path d="M24 17h-7v7Z" fill="#fdf7b0" />
            <path d="M12 5a4.500 4.500 0 0 1 2.500 8.200V16h-5v-2.800A4.500 4.500 0 0 1 12 5ZM10 18h4" fill="none" stroke="#c9b50a" strokeWidth="1.300" />
          </svg>
        </TaskButton>
        <TaskButton plain><Spotify /></TaskButton>
        <TaskButton>
          <svg width="33" height="26" viewBox="0 0 33 26">
            <path d="M1 3 20 0l12 3v5l-4 1H3Z" fill="#8f3c8f" stroke="#3d173d" />
            <path d="M1 9h30v7H1z" fill="#2f55c8" stroke="#14235c" />
            <path d="M1 17h30v7l-4 1H1z" fill="#2aa33b" stroke="#0e4717" />
            <path d="M1 6h13M1 12.500h13M1 20.500h13" stroke="#e8e0cf" strokeWidth="1.800" />
            <path d="M18 1h5v24h-5z" fill="#9a7348" />
            <path d="M17 10h7v7h-7z" fill="#d5c49d" stroke="#554020" />
          </svg>
        </TaskButton>
        <TaskButton plain>
          <svg width="32" height="28" viewBox="0 0 32 28">
            <path d="m0 17 10-4 8-8 3-4-7 20-6 1Z" fill="#3f86c0" />
            <path d="M21 0c3 5 5 16 10 22-4-1-7-1-10 5-2-3-3-5-5-5-2 2-4 4-6 5 6-8 7-20 11-27Z" fill="#d84a1b" />
            <path d="M21 0c0 8-3 18-11 27 2-9 6-20 11-27Z" fill="#f3a13b" />
            <path d="M22 4c2 6 4 14 9 18-5-2-8 0-10 5Z" fill="#a82318" />
          </svg>
        </TaskButton>
        <TaskButton><Spotify /></TaskButton>
        <TaskButton>
          <svg width="32" height="32" viewBox="0 0 32 32">
            <path d="M0 0h32v32H0z" fill="#3f2b6e" />
            <circle cx="16" cy="16" r="11" fill="#1b1b1b" stroke="#c9c9c9" strokeWidth="3" />
            <circle cx="16" cy="16" r="13.500" fill="none" stroke="#dcdcdc" strokeWidth="3" strokeDasharray="4 4.480" />
            <path d="M1 8h30v7.500H1z" fill="#1b1b1b" opacity="0.750" />
            <text x="16" y="15" textAnchor="middle" fontSize="8.500" fill="#ff8a2b" className="font-['Liberation_Sans',sans-serif]">Java EE</text>
            <text x="16" y="23.500" textAnchor="middle" fontSize="9" fill="#ff8a2b" className="font-['Liberation_Sans',sans-serif]">IDE</text>
          </svg>
        </TaskButton>
        <TaskButton>
          <svg width="33" height="33" viewBox="0 0 33 33">
            <path d="m16.500 1.200 14.300 14.300q1 1 0 2L17.500 31.800q-1 1-2 0L1.200 17.500q-1-1 0-2Z" fill="#f05133" />
            <path d="m11 6 5 5M16.500 12v11M17 11.500l5 5" stroke="#4d5a6b" strokeWidth="1.800" />
            <g fill="#4d5a6b"><circle cx="16.500" cy="10.800" r="2.400" /><circle cx="16.500" cy="23" r="2.500" /><circle cx="22.300" cy="16.500" r="2.400" /></g>
          </svg>
        </TaskButton>
        <TaskButton>
          <svg width="34" height="32" viewBox="0 0 34 32">
            <path d="M14 7C6 7 0 14 2 18c1 3 5 1 6 4 0 3-4 5 0 7 6 3 21-1 21-12 0-6-7-10-15-10Z" fill="#c9e4f4" stroke="#7fb1d1" />
            <circle cx="6.500" cy="17" r="2.600" fill="#d83a30" /><circle cx="11" cy="12.500" r="2.600" fill="#48a948" /><circle cx="18" cy="10.500" r="2.800" fill="#f0ad2c" /><circle cx="14" cy="19.500" r="2.600" fill="#44688d" />
            <path d="m27 8-11 22 2 1L30 9Z" fill="#e88124" stroke="#b55a10" strokeWidth="0.600" />
            <path d="m25 7 0-5 6 2 1-2v5l-2 3Z" fill="#c79f75" />
          </svg>
        </TaskButton>
        <TaskButton active><TableauCrosses size={32} /></TaskButton>
      </div>
      <div className="ml-[595px]"><Grip /></div>
      <svg className="ml-[11px] shrink-0" width="30" height="18" viewBox="0 0 30 18">
        <rect x="1" y="1" width="28" height="16" fill="none" stroke="#fff" strokeWidth="2" />
        <path d="M4 5h22M4 9h22" stroke="#fff" strokeWidth="2.600" strokeDasharray="3 1" />
        <path d="M4 13.200h3M8 13.200h14M23 13.200h3" stroke="#fff" strokeWidth="2.600" />
      </svg>
      <svg className="ml-[14px] shrink-0" width="8" height="4" viewBox="0 0 8 4"><path d="M0 4h8L4 0Z" fill="#fff" /></svg>
      <div className="ml-[14px] shrink-0"><ChromeLogo size={14} /></div>
      <svg className="ml-[16px] shrink-0" width="9" height="15" viewBox="0 0 9 15">
        <path d="M3 0h3v2h2.500v12.500H.5V2H3Z" fill="#fff" stroke="#14263a" strokeWidth="0.500" />
        <path d="M2 4h5v9H2z" fill="#1b3048" /><path d="M3 5h3v7H3z" fill="#fff" />
      </svg>
      <svg className="ml-[9px] shrink-0" width="15" height="12" viewBox="0 0 15 12" stroke="#fff" strokeWidth="2">
        <path d="M1 12v-2M4 12V9M7.300 12V6.500M10.600 12V3.500M13.900 12V.5" />
      </svg>
      <svg className="ml-[13px] shrink-0" width="9" height="14" viewBox="0 0 9 14"><path d="M0 4.500h2v5H0zM2.800 4.500 7.500 0v14L2.800 9.500Z" fill="#fff" /></svg>
      <div className="ml-[14px] w-[62px] pt-px text-center text-[12px] leading-[17px] tracking-[-0.3px]">
        12:59 PM
        <br />
        9/28/2014
      </div>
    </div>
  );
}

export default function App() {
  return (
    <div className="h-[900px] w-[1600px] overflow-hidden font-['Open_Sans','Noto_Sans',sans-serif]">
      <div className="flex h-[860px]">
        <TableauWindow />
        <ChromeWindow />
      </div>
      <Taskbar />
    </div>
  );
}
